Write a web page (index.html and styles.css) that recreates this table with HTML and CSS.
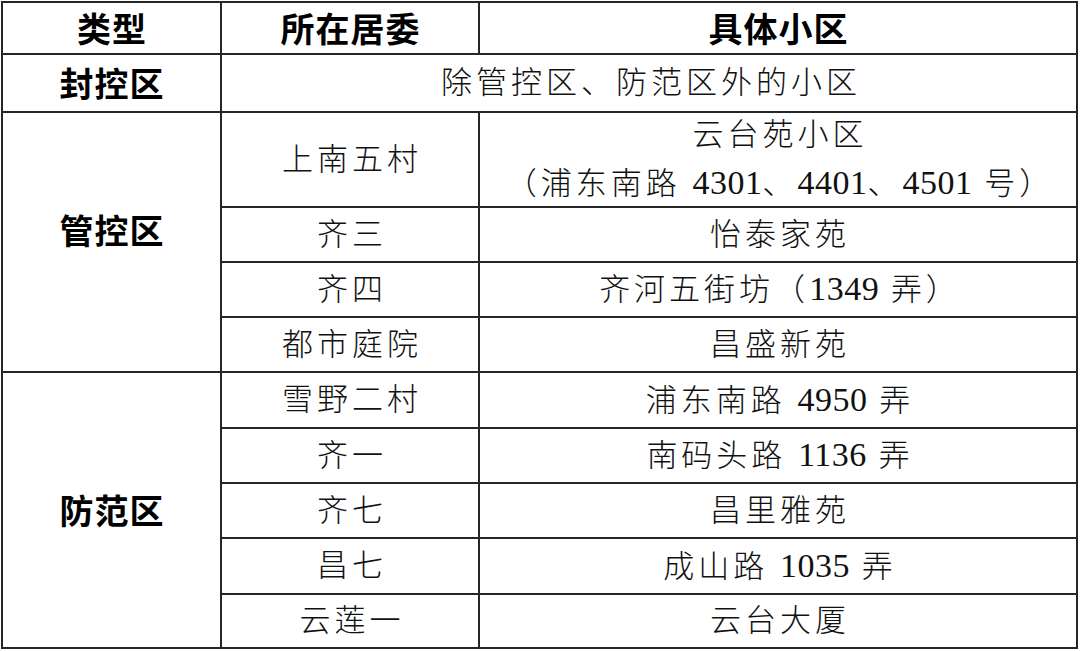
FILE: index.html
```html
<!DOCTYPE html>
<html lang="zh-CN">
<head>
<meta charset="utf-8">
<title>管控区域表</title>
<link rel="stylesheet" href="styles.css">
</head>
<body>
<div class="table">
  <div class="cell head"><span class="txt">类型</span></div>
  <div class="cell head"><span class="txt">所在居委</span></div>
  <div class="cell head"><span class="txt">具体小区</span></div>

  <div class="cell head"><span class="txt">封控区</span></div>
  <div class="cell wide"><span class="txt">除管控区、防范区外的小区</span></div>

  <div class="cell head group-4"><span class="txt">管控区</span></div>
  <div class="cell"><span class="txt">上南五村</span></div>
  <div class="cell two-line"><span class="txt">云台苑小区<br>（浦东南路 <span class="num">4301</span>、<span class="num">4401</span>、<span class="num">4501</span> 号）</span></div>
  <div class="cell"><span class="txt">齐三</span></div>
  <div class="cell"><span class="txt">怡泰家苑</span></div>
  <div class="cell"><span class="txt">齐四</span></div>
  <div class="cell"><span class="txt">齐河五街坊（<span class="num">1349</span> 弄）</span></div>
  <div class="cell"><span class="txt">都市庭院</span></div>
  <div class="cell"><span class="txt">昌盛新苑</span></div>

  <div class="cell head group-5"><span class="txt">防范区</span></div>
  <div class="cell"><span class="txt">雪野二村</span></div>
  <div class="cell"><span class="txt">浦东南路 <span class="num">4950</span> 弄</span></div>
  <div class="cell"><span class="txt">齐一</span></div>
  <div class="cell"><span class="txt">南码头路 <span class="num">1136</span> 弄</span></div>
  <div class="cell"><span class="txt">齐七</span></div>
  <div class="cell"><span class="txt">昌里雅苑</span></div>
  <div class="cell"><span class="txt">昌七</span></div>
  <div class="cell"><span class="txt">成山路 <span class="num">1035</span> 弄</span></div>
  <div class="cell"><span class="txt">云莲一</span></div>
  <div class="cell"><span class="txt">云台大厦</span></div>
</div>
</body>
</html>
```

FILE: styles.css
```css
html, body {
  margin: 0;
  padding: 0;
  background: #ffffff;
}

.table {
  margin: 1px 0 0 1px;
  width: 1073px;
  display: grid;
  grid-template-columns: 217px 256px 596px;
  grid-template-rows: 50px 56px 93px 53px 53px 53px 54px 53px 53px 54px 52px;
  gap: 2px;
  padding: 2px;
  background: #262626;
}

.cell {
  background: #ffffff;
  display: flex;
  align-items: center;
  justify-content: center;
  text-align: center;
  font-family: "Liberation Serif", "Noto Sans CJK SC", serif;
  font-size: 31px;
  font-weight: 300;
  letter-spacing: 4px;
  padding-left: 4px;
  color: #111111;
  white-space: nowrap;
  line-height: 40px;
}

.txt {
  display: block;
}

.head {
  font-family: "Noto Sans CJK SC", sans-serif;
  font-weight: 700;
  font-size: 34px;
  letter-spacing: 1px;
  padding-left: 1px;
  color: #000000;
}

.wide {
  grid-column: span 2;
}

.group-4 {
  grid-row: span 4;
  padding-bottom: 24px;
}

.group-5 {
  grid-row: span 5;
}

.two-line {
  line-height: 48px;
}

.num {
  font-size: 34px;
  font-weight: 400;
  letter-spacing: 0.5px;
}
```
